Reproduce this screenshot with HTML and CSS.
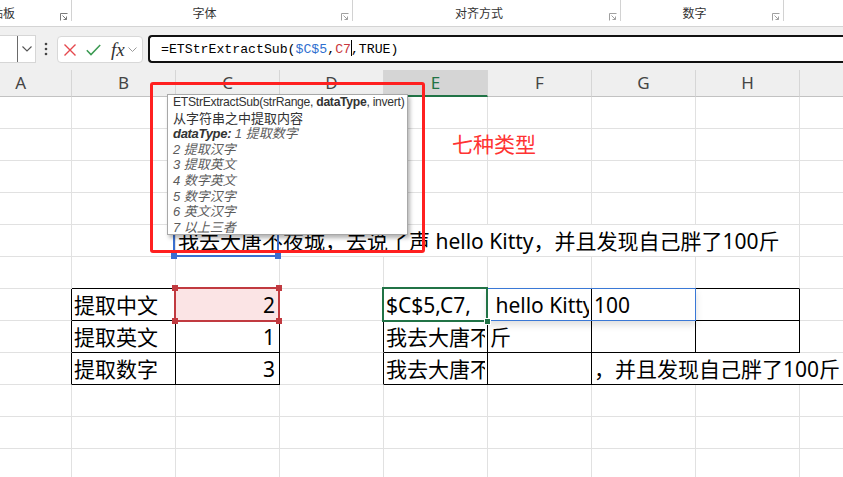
FILE: index.html
```html
<!DOCTYPE html>
<html lang="zh">
<head>
<meta charset="utf-8">
<title>ETStrExtractSub</title>
<link rel="stylesheet" href="styles.css">
</head>
<body>
<div class="app">
  <div class="ribbon">
    <div class="grp g1"><span class="lbl first">贴板</span><svg class="launch" viewBox="0 0 8 8" width="8" height="8"><path d="M0.5 7.5V0.5H7.5M2.5 2.5L6.5 6.5M6.5 3.5V6.5H3.5" fill="none" stroke="#7a7a7a" stroke-width="1"/></svg></div>
    <div class="grp g2"><span class="lbl">字体</span><svg class="launch" viewBox="0 0 8 8" width="8" height="8"><path d="M0.5 7.5V0.5H7.5M2.5 2.5L6.5 6.5M6.5 3.5V6.5H3.5" fill="none" stroke="#a0a0a0" stroke-width="1"/></svg></div>
    <div class="grp g3"><span class="lbl">对齐方式</span><svg class="launch" viewBox="0 0 8 8" width="8" height="8"><path d="M0.5 7.5V0.5H7.5M2.5 2.5L6.5 6.5M6.5 3.5V6.5H3.5" fill="none" stroke="#a0a0a0" stroke-width="1"/></svg></div>
    <div class="grp g4"><span class="lbl">数字</span><svg class="launch" viewBox="0 0 8 8" width="8" height="8"><path d="M0.5 7.5V0.5H7.5M2.5 2.5L6.5 6.5M6.5 3.5V6.5H3.5" fill="none" stroke="#a0a0a0" stroke-width="1"/></svg></div>
  </div>

  <div class="fbar">
    <div class="namebox"><span class="nb-drop"><svg viewBox="0 0 10 6" width="10" height="6"><path d="M0.5 0.5L5 5L9.5 0.5" fill="none" stroke="#555" stroke-width="1.1"/></svg></span></div>
    <svg class="dots" viewBox="0 0 4 14" width="4" height="14"><circle cx="2" cy="2" r="1.3" fill="#444"/><circle cx="2" cy="7" r="1.3" fill="#444"/><circle cx="2" cy="12" r="1.3" fill="#444"/></svg>
    <div class="fxbox">
      <svg class="ic-x" viewBox="0 0 12 12" width="12" height="12"><path d="M0.5 0.5L11.5 11.5M11.5 0.5L0.5 11.5" stroke="#e5484d" stroke-width="1.4" fill="none"/></svg>
      <svg class="ic-ok" viewBox="0 0 15 12" width="15" height="12"><path d="M0.8 6.2L5 10.6L14.2 1" stroke="#3b9a52" stroke-width="1.5" fill="none"/></svg>
      <span class="fx">fx</span>
      <svg class="ic-dd" viewBox="0 0 9 5" width="9" height="5"><path d="M0.5 0.5L4.5 4.5L8.5 0.5" fill="none" stroke="#9a9a9a" stroke-width="1"/></svg>
    </div>
    <div class="formula">=ETStrExtractSub(<span class="fb">$C$5</span>,<span class="fr">C7</span><span class="caret"></span>,TRUE)</div>
  </div>

  <div class="sheet">
    <div class="h ha">A</div><div class="h">B</div><div class="h">C</div><div class="h">D</div><div class="h sel">E</div><div class="h">F</div><div class="h">G</div><div class="h">H</div><div class="h"></div>

    <div class="c"></div><div class="c"></div><div class="c"></div><div class="c"></div><div class="c"></div><div class="c"></div><div class="c"></div><div class="c"></div><div class="c"></div>
    <div class="c"></div><div class="c"></div><div class="c"></div><div class="c"></div><div class="c"></div><div class="c"></div><div class="c"></div><div class="c"></div><div class="c"></div>
    <div class="c"></div><div class="c"></div><div class="c"></div><div class="c"></div><div class="c"></div><div class="c"></div><div class="c"></div><div class="c"></div><div class="c"></div>
    <div class="c"></div><div class="c"></div><div class="c"></div><div class="c"></div><div class="c"></div><div class="c"></div><div class="c"></div><div class="c"></div><div class="c"></div>

    <div class="c"></div><div class="c"></div>
    <div class="c span6">我去大唐不夜城，去说了声 hello Kitty，并且发现自己胖了100斤<span class="ref-blue"><i class="hd bl"></i><i class="hd brr"></i></span></div>
    <div class="c"></div>

    <div class="c"></div><div class="c bb"></div><div class="c bb"></div><div class="c"></div><div class="c bb"></div><div class="c bb"></div><div class="c bb"></div><div class="c bb"></div><div class="c"></div>

    <div class="c br"></div>
    <div class="c br bb">提取中文</div>
    <div class="c br bb num pink">2<span class="ref-red"><i class="hd tl"></i><i class="hd tr"></i><i class="hd bl"></i><i class="hd brr"></i></span></div>
    <div class="c br"></div>
    <div class="c br bb">$C$5,C7,<span class="active"><i class="fill"></i></span></div>
    <div class="c br bb"><span class="clip">&nbsp;hello Kitty</span><span class="spill"></span></div>
    <div class="c br bb">100</div>
    <div class="c br bb"></div>
    <div class="c"></div>

    <div class="c br"></div>
    <div class="c br bb">提取英文</div>
    <div class="c br bb num">1</div>
    <div class="c br"></div>
    <div class="c br bb"><span class="clip">我去大唐不夜城，去说了声</span></div>
    <div class="c br bb">斤</div>
    <div class="c br bb"></div>
    <div class="c br bb"></div>
    <div class="c"></div>

    <div class="c br"></div>
    <div class="c br bb">提取数字</div>
    <div class="c br bb num">3</div>
    <div class="c br"></div>
    <div class="c br bb"><span class="clip">我去大唐不夜城，去说了声</span></div>
    <div class="c br bb"></div>
    <div class="c bb span3">，并且发现自己胖了100斤</div>

    <div class="c"></div><div class="c"></div><div class="c"></div><div class="c"></div><div class="c"></div><div class="c"></div><div class="c"></div><div class="c"></div><div class="c"></div>
    <div class="c"></div><div class="c"></div><div class="c"></div><div class="c"></div><div class="c"></div><div class="c"></div><div class="c"></div><div class="c"></div><div class="c"></div>
    <div class="c"></div><div class="c"></div><div class="c"></div><div class="c"></div><div class="c"></div><div class="c"></div><div class="c"></div><div class="c"></div><div class="c"></div>
  </div>

  <div class="tip">
    <div class="ln sig">ETStrExtractSub(strRange, <b>dataType</b>, invert)</div>
    <div class="ln">从字符串之中提取内容</div>
    <div class="ln it"><b>dataType:</b> 1 提取数字</div>
    <div class="ln it">2 提取汉字</div>
    <div class="ln it">3 提取英文</div>
    <div class="ln it">4 数字英文</div>
    <div class="ln it">5 数字汉字</div>
    <div class="ln it">6 英文汉字</div>
    <div class="ln it">7 以上三者</div>
  </div>
  <div class="redbox"></div>
  <div class="note">七种类型</div>
</div>
</body>
</html>
```

FILE: styles.css
```css
html, body {
  margin: 0;
  padding: 0;
  background: #fff;
}
body {
  font-family: "Noto Sans", "Noto Sans CJK SC", sans-serif;
  color: #000;
}
.app {
  position: relative;
  width: 843px;
  height: 477px;
  overflow: hidden;
}

/* ribbon group labels */
.ribbon {
  height: 26px;
  border-bottom: 1px solid #d4d4d4;
  display: flex;
  background: #fff;
}
.grp {
  height: 21px;
  box-sizing: border-box;
  border-right: 1px solid #d2d2d2;
  display: flex;
  align-items: flex-end;
  font-size: 12px;
  color: #333;
}
.lbl {
  flex: 1;
  text-align: center;
  line-height: 16px;
  font-family: "Noto Sans CJK SC", sans-serif;
  padding-right: 4px;
}
.lbl.first {
  flex: 0 0 auto;
  margin-left: -9px;
  padding: 0;
}
.launch {
  flex: 0 0 auto;
  margin: 0 3px 0 auto;
}
.g1 { width: 72px; }
.g2 { width: 281px; }
.g3 { width: 268px; }
.g4 { width: 163px; }

/* formula bar */
.fbar {
  height: 43px;
  box-sizing: border-box;
  background: #f0f0f0;
  display: flex;
  align-items: flex-start;
  padding-top: 8px;
}
.namebox {
  width: 36px;
  height: 28px;
  box-sizing: border-box;
  background: #fff;
  border: 1px solid #d6d6d6;
  border-left: none;
  display: flex;
  justify-content: flex-end;
}
.nb-drop {
  width: 18px;
  box-sizing: border-box;
  border-left: 1px solid #6a6a6a;
  display: flex;
  align-items: center;
  justify-content: center;
}
.dots {
  margin: 7px 0 0 8px;
}
.fxbox {
  margin: 1px 0 0 9px;
  width: 86px;
  height: 27px;
  box-sizing: border-box;
  background: #fff;
  border: 1px solid #d8d8d8;
  border-radius: 4px;
  display: flex;
  align-items: center;
}
.ic-x { margin-left: 6px; }
.ic-ok { margin-left: 10px; }
.fx {
  margin-left: 10px;
  font-family: "Liberation Serif", serif;
  font-style: italic;
  font-size: 19px;
  line-height: 20px;
  color: #333;
}
.ic-dd { margin-left: 3px; }
.formula {
  flex: 1;
  margin-left: 5px;
  height: 28px;
  box-sizing: border-box;
  background: #fff;
  border: 2px solid #111;
  border-right: none;
  border-radius: 4px 0 0 4px;
  padding-left: 11px;
  font-family: "Liberation Mono", monospace;
  font-size: 13.2px;
  line-height: 25px;
  white-space: nowrap;
}
.fb { color: #2f6fcf; }
.fr { color: #c8373d; }
.caret {
  display: inline-block;
  width: 1px;
  height: 16px;
  background: #000;
  vertical-align: -3px;
  margin-right: -1px;
}

/* sheet */
.sheet {
  display: grid;
  grid-template-columns: 72px repeat(7, 104px) 44px;
  grid-template-rows: 27px;
  grid-auto-rows: 32px;
}
.h {
  box-sizing: border-box;
  background: #efefef;
  border-right: 1px solid #d6d6d6;
  border-bottom: 1px solid #c2c2c2;
  font-size: 17px;
  line-height: 26px;
  color: #444;
  text-align: center;
}
.h.ha {
  text-align: right;
  padding-right: 45px;
}
.h.sel {
  background: #d5d5d5;
  color: #217346;
  border-bottom: 2px solid #217346;
  line-height: 25px;
}
.c {
  position: relative;
  box-sizing: border-box;
  border-right: 1px solid #e1e1e1;
  border-bottom: 1px solid #e1e1e1;
  display: flex;
  align-items: center;
  padding: 0 2px;
  font-size: 21px;
  line-height: 30px;
  white-space: nowrap;
  min-width: 0;
}
.c.br { border-right-color: #000; }
.c.bb { border-bottom-color: #000; }
.c.num {
  justify-content: flex-end;
  padding-right: 4px;
}
.c.pink { background: #fbe4e5; }
.span6 { grid-column: span 6; }
.span3 { grid-column: span 3; }
.clip {
  display: block;
  overflow: hidden;
  min-width: 0;
  flex: 1 1 auto;
}

/* reference / selection outlines */
.ref-blue, .ref-red, .active, .spill {
  position: absolute;
  box-sizing: border-box;
  pointer-events: none;
}
.ref-blue {
  left: -3px;
  top: -3px;
  width: 106px;
  height: 35px;
  border: 2px solid #3a6fd0;
  z-index: 3;
}
.ref-red {
  left: -2px;
  top: -2px;
  width: 106px;
  height: 35px;
  border: 2px solid #c13a40;
  z-index: 3;
}
.active {
  left: -2px;
  top: -2px;
  width: 106px;
  height: 35px;
  border: 2px solid #217346;
  z-index: 4;
}
.spill {
  left: -1px;
  top: -1px;
  width: 209px;
  height: 33px;
  border: 1px solid #3a78d6;
  box-shadow: 0 4px 7px rgba(0, 0, 0, 0.13);
  z-index: 3;
}
.hd {
  position: absolute;
  width: 6px;
  height: 6px;
  box-sizing: border-box;
}
.ref-blue .hd { background: #3a6fd0; }
.ref-red .hd { background: #c13a40; }
.hd.tl { left: -4px; top: -4px; }
.hd.tr { right: -4px; top: -4px; }
.hd.bl { left: -4px; bottom: -4px; }
.hd.brr { right: -4px; bottom: -4px; }
.fill {
  position: absolute;
  right: -5px;
  bottom: -5px;
  width: 7px;
  height: 7px;
  box-sizing: border-box;
  background: #217346;
  border: 1px solid #fff;
}

/* function tooltip */
.tip {
  position: absolute;
  left: 167px;
  top: 94px;
  width: 241px;
  height: 141px;
  box-sizing: border-box;
  background: #fff;
  border: 1px solid #a8a8a8;
  box-shadow: 2px 3px 4px rgba(0, 0, 0, 0.3);
  padding: 0 5px;
  font-family: "Liberation Sans", "Noto Sans CJK SC", sans-serif;
  font-size: 13px;
  line-height: 15.6px;
  color: #333;
  z-index: 6;
}
.ln {
  white-space: nowrap;
}
.ln.sig {
  font-size: 12.2px;
  letter-spacing: -0.3px;
}
.ln.it {
  font-style: italic;
  color: #5c5c5c;
}
.ln.it b {
  color: #333;
  letter-spacing: -0.3px;
}

/* annotation */
.redbox {
  position: absolute;
  left: 150px;
  top: 82px;
  width: 275px;
  height: 171px;
  box-sizing: border-box;
  border: 3px solid #ff2020;
  border-radius: 3px;
  z-index: 7;
}
.note {
  position: absolute;
  left: 452px;
  top: 130px;
  font-family: "Noto Sans CJK SC", sans-serif;
  font-size: 21px;
  line-height: 26px;
  color: #ff3333;
  z-index: 7;
}
```
